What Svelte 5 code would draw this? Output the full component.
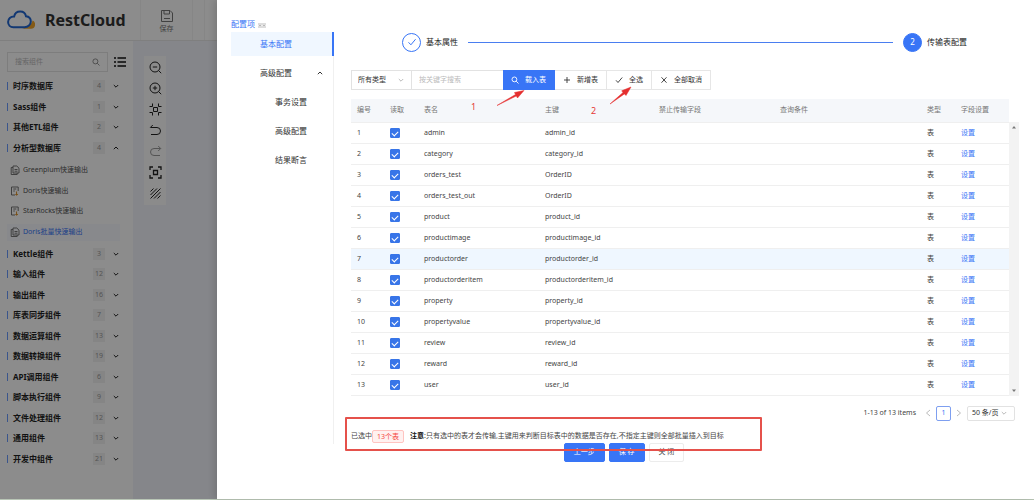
<script>
  const groups = [
    { name: '时序数据库', count: 4 },
    { name: 'Sass组件', count: 1 },
    { name: '其他ETL组件', count: 2 },
    {
      name: '分析型数据库',
      count: 4,
      children: [
        { name: 'Greenplum快速输出', icon: 'copy' },
        { name: 'Doris快速输出', icon: 'export' },
        { name: 'StarRocks快速输出', icon: 'export' },
        { name: 'Doris批量快速输出', icon: 'copy', active: true }
      ]
    },
    { name: 'Kettle组件', count: 3 },
    { name: '输入组件', count: 12 },
    { name: '输出组件', count: 16 },
    { name: '库表同步组件', count: 7 },
    { name: '数据运算组件', count: 13 },
    { name: '数据转换组件', count: 19 },
    { name: 'API调用组件', count: 6 },
    { name: '脚本执行组件', count: 9 },
    { name: '文件处理组件', count: 12 },
    { name: '通用组件', count: 13 },
    { name: '开发中组件', count: 21 }
  ];

  const columns = [
    { title: '编号', width: 33 },
    { title: '读取', width: 34 },
    { title: '表名', width: 121 },
    { title: '主键', width: 114 },
    { title: '禁止传输字段', width: 121 },
    { title: '查询条件', width: 147 },
    { title: '类型', width: 34 },
    { title: '字段设置', width: 54 }
  ];

  let rows = $state(
    [
      ['admin', 'admin_id'],
      ['category', 'category_id'],
      ['orders_test', 'OrderID'],
      ['orders_test_out', 'OrderID'],
      ['product', 'product_id'],
      ['productimage', 'productimage_id'],
      ['productorder', 'productorder_id'],
      ['productorderitem', 'productorderitem_id'],
      ['property', 'property_id'],
      ['propertyvalue', 'propertyvalue_id'],
      ['review', 'review_id'],
      ['reward', 'reward_id'],
      ['user', 'user_id']
    ].map(([name, key]) => ({ name, key, read: true }))
  );

  let selected = $derived(rows.filter((r) => r.read).length);

  function setAll(value) {
    rows.forEach((r) => (r.read = value));
  }
</script>

{#snippet chevron(up)}
  <svg class="chev" viewBox="0 0 8 8" width="8" height="8" aria-hidden="true">
    <path d={up ? 'M1.8 5.2 4 3l2.2 2.2' : 'M1.8 3 4 5.2 6.2 3'} fill="none" stroke="currentColor" stroke-width="1" />
  </svg>
{/snippet}

<div class="app">
  <div class="workspace">
    <header class="topbar">
      <div class="brand">
        <svg viewBox="0 0 28 20" width="28" height="20" aria-hidden="true">
          <path d="M15 18.800h9a4.300 4.300 0 0 0 1.600-8.200c-1 4.400-5.400 7.400-10.600 8.200z" fill="#f0a52a" />
          <path
            d="M6.300 17.200h11.200c3.600 0 6.300-2.500 6.300-5.600 0-2.900-2-5-4.800-5.300C18.500 3.400 16.300 1.500 13.200 1.500c-3.300 0-5.500 2.100-6.100 5.100C3.600 6.500 1.100 8.900 1.100 12c0 3 2.200 5.200 5.200 5.200z"
            fill="#fff" stroke="#2166d1" stroke-width="2" />
        </svg>
        <span>RestCloud</span>
      </div>
      <button class="save" type="button">
        <svg viewBox="0 0 14 14" width="14" height="14" fill="none" stroke="currentColor" aria-hidden="true">
          <path d="M1.500 1.500h8.500l2.500 2.500v8.500h-11zM4 1.500v3.500h5.500v-3.500M4 9.500h6" />
        </svg>
        保存
      </button>
      <div class="next"></div>
    </header>

    <div class="work">
      <aside class="sidebar">
        <div class="finder">
          <label class="find">
            <input type="text" placeholder="搜索组件" aria-label="搜索组件" />
            <svg viewBox="0 0 8 8" width="8" height="8" fill="none" stroke="currentColor" stroke-width=".8" aria-hidden="true">
              <circle cx="3.400" cy="3.400" r="2.500" /><path d="m5.300 5.300 2.200 2.200" />
            </svg>
          </label>
          <button type="button" class="icon" aria-label="列表">
            <svg viewBox="0 0 12 12" width="12" height="12" stroke="#111" stroke-width="1.400" aria-hidden="true">
              <path d="M0 2h2M0 6h2M0 10h2M3.500 2h8.500M3.500 6h8.500M3.500 10h8.500" />
            </svg>
          </button>
        </div>
        <nav class="tree">
          {#each groups as g}
            <button type="button" class="group">
              <span class="name">{g.name}</span>
              <span class="count">{g.count}</span>
              {@render chevron(!!g.children)}
            </button>
            {#if g.children}
              <div class="leaves">
                {#each g.children as c}
                  <button type="button" class="leaf" class:active={c.active}>
                    <svg viewBox="0 0 10 10" width="10" height="10" fill="none" stroke="#666" stroke-width=".9" aria-hidden="true">
                      {#if c.icon === 'copy'}
                        <path d="M3 1h3.800l2.200 2.200v4.800h-6zM3 2.500h-1.800v7h6v-1.500M4.500 4.500h3M4.500 6.200h3" />
                      {:else}
                        <path d="M8.200 5v-4h-6.700v8h3.500M3.300 3h3M3.300 5h1.500" />
                        <path d="M6.500 5.500v3.500M5.300 8l1.200 1.300L8 8" stroke="#d98a1e" />
                      {/if}
                    </svg>
                    {c.name}
                  </button>
                {/each}
              </div>
            {/if}
          {/each}
        </nav>
      </aside>

      <div class="canvas">
        <div class="tools">
          <button type="button" class="icon" aria-label="缩小">
            <svg viewBox="0 0 13 13"><circle cx="6" cy="6" r="5" /><path d="M3.800 6h4.400M9.600 9.600l2.600 2.600" /></svg>
          </button>
          <button type="button" class="icon" aria-label="放大">
            <svg viewBox="0 0 13 13"><circle cx="6" cy="6" r="5" /><path d="M3.800 6h4.400M6 3.800v4.400M9.600 9.600l2.600 2.600" /></svg>
          </button>
          <button type="button" class="icon" aria-label="实际尺寸">
            <svg viewBox="0 0 13 13"><path d="M4.500 4.500h4v4h-4zM.5 3.500h3v-3M9.500 .5v3h3M12.500 9.500h-3v3M3.500 12.500v-3h-3" /></svg>
          </button>
          <button type="button" class="icon" aria-label="撤销">
            <svg viewBox="0 0 13 13"><path d="M1.500 3.500h6.500a3.500 3.500 0 0 1 0 7h-6M3.800 1 1.300 3.500" /></svg>
          </button>
          <button type="button" class="icon" aria-label="重做" disabled>
            <svg viewBox="0 0 13 13"><path d="M11.500 3.500h-6.500a3.500 3.500 0 0 0 0 7h6M9.200 1l2.500 2.500-2.500 2.500" /></svg>
          </button>
          <button type="button" class="icon" aria-label="适应画布">
            <svg viewBox="0 0 13 13"><path d="M4.500 4.500h4v4h-4zM1 4v-3h3M9 1h3v3M12 9v3h-3M4 12h-3v-3" stroke-width="1.300" /></svg>
          </button>
          <button type="button" class="icon" aria-label="网格">
            <svg viewBox="0 0 13 13"><path d="M1.500 4.500l3-3M1.500 8 8 1.500M1.500 11.500l10-10M5 11.500l6.500-6.500M8.500 11.500l3-3" /></svg>
          </button>
        </div>
      </div>
    </div>
    <div class="mask"></div>
  </div>

  <main class="drawer">
    <h1>
      配置项
      <svg viewBox="0 0 8 5" width="8" height="5" fill="none" stroke="#aaa" stroke-width=".8" aria-hidden="true">
        <path d="M0 1h8M1 5v-2.500h2v2.500M5 5v-2.500h2v2.500" />
      </svg>
    </h1>
    <div class="body">
      <nav class="menu">
        <a href="#basic" class="active">基本配置</a>
        <a href="#advanced">高级配置 {@render chevron(true)}</a>
        <a href="#transaction" class="sub">事务设置</a>
        <a href="#more" class="sub">高级配置</a>
        <a href="#assert" class="sub">结果断言</a>
      </nav>

      <section class="content">
        <ol class="steps">
          <li>
            <span class="dot done">
              <svg viewBox="0 0 10 10" width="10" height="10" aria-hidden="true"><path d="m1.500 5.300 2.400 2.500 4.700-5.600" fill="none" stroke="currentColor" /></svg>
            </span>
            基本属性
          </li>
          <li class="line" aria-hidden="true"></li>
          <li><span class="dot">2</span>传输表配置</li>
        </ol>

        <div class="toolbar">
          <div class="picker">
            <select aria-label="类型"><option>所有类型</option></select>
            {@render chevron(false)}
          </div>
          <input class="keyword" type="text" placeholder="按关键字搜索" aria-label="按关键字搜索" />
          <button type="button" class="primary">
            <svg viewBox="0 0 8 8" width="8" height="8" aria-hidden="true"><circle cx="3.400" cy="3.400" r="2.400" /><path d="m5.200 5.200 2.300 2.300" /></svg>
            载入表
          </button>
          <button type="button">
            <svg viewBox="0 0 8 8" width="8" height="8" aria-hidden="true"><path d="M1 4h6M4 1v6" /></svg>
            新增表
          </button>
          <button type="button" onclick={() => setAll(true)}>
            <svg viewBox="0 0 8 8" width="8" height="8" aria-hidden="true"><path d="m1 4.300 2 2.200 4.200-5" /></svg>
            全选
          </button>
          <button type="button" onclick={() => setAll(false)}>
            <svg viewBox="0 0 8 8" width="8" height="8" aria-hidden="true"><path d="m1.500 1.300 5 5.400M6.500 1.300l-5 5.400" /></svg>
            全部取消
          </button>
          <svg class="arrow first" viewBox="0 0 30 18" width="30" height="18" aria-hidden="true">
            <path d="M1 16.500 19.500 5.500 18.500 3.500 28 1.500l-6.500 7.500-1.200-2z" />
          </svg>
          <svg class="arrow second" viewBox="0 0 24 20" width="24" height="20" aria-hidden="true">
            <path d="M1 18 14 6.500 12.700 4.800 22 1l-5 8.500-1.600-1.600z" />
          </svg>
        </div>

        <div class="grid">
          <table>
            <colgroup>
              {#each columns as c}<col style="width: {c.width}px" />{/each}
            </colgroup>
            <thead>
              <tr>{#each columns as c}<th>{c.title}</th>{/each}</tr>
            </thead>
            <tbody>
              {#each rows as r, i}
                <tr class:hover={i === 6}>
                  <td>{i + 1}</td>
                  <td><input type="checkbox" bind:checked={r.read} aria-label="读取 {r.name}" /></td>
                  <td>{r.name}</td>
                  <td>{r.key}</td>
                  <td></td>
                  <td></td>
                  <td>表</td>
                  <td><a href="#set">设置</a></td>
                </tr>
              {/each}
            </tbody>
          </table>
          <div class="track" aria-hidden="true">
            <svg viewBox="0 0 6 4" width="6" height="4"><path d="M1 3.500h4l-2-2.500z" /></svg>
            <svg viewBox="0 0 6 4" width="6" height="4"><path d="M1 .5h4l-2 2.500z" /></svg>
          </div>
          <span class="mark one">1</span>
          <span class="mark two">2</span>
        </div>

        <div class="pager">
          <span>1-13 of 13 items</span>
          <button type="button" class="step" aria-label="上一页">
            <svg viewBox="0 0 6 8" width="6" height="8"><path d="M5 1 1.500 4l3.500 3" /></svg>
          </button>
          <button type="button" class="page">1</button>
          <button type="button" class="step" aria-label="下一页">
            <svg viewBox="0 0 6 8" width="6" height="8"><path d="m1 1 3.500 3-3.500 3" /></svg>
          </button>
          <div class="picker size">
            <select aria-label="每页条数"><option>50 条/页</option></select>
            {@render chevron(false)}
          </div>
        </div>

        <div class="foot">
          <p class="notice">
            已选中<span class="tag">{selected}个表</span><b>注意</b>:只有选中的表才会传输,主键用来判断目标表中的数据是否存在,不指定主键则全部批量插入到目标
          </p>
          <div class="actions">
            <button type="button" class="primary">上一步</button>
            <button type="button" class="primary">保 存</button>
            <button type="button">关 闭</button>
          </div>
          <div class="frame"></div>
        </div>
      </section>
    </div>
  </main>
</div>

<style>
  :global(body) {
    background: #fff;
  }
  * {
    box-sizing: border-box;
  }
  .app {
    display: grid;
    grid-template-columns: 217px 1fr;
    min-height: 100vh;
    border-bottom: 1px solid #b9c6b6;
    font: 7px/12px 'Noto Sans', 'Noto Sans CJK SC', sans-serif;
    color: #444;
  }
  button,
  input,
  select {
    margin: 0;
    padding: 0;
    border: 0;
    background: none;
    font: inherit;
    color: inherit;
    outline: none;
  }
  a {
    color: #3875f6;
    text-decoration: none;
  }
  svg {
    flex: none;
  }
  .icon {
    display: flex;
  }

  /* Workspace behind the drawer */
  .workspace {
    position: relative;
    display: flex;
    flex-direction: column;
    overflow: hidden;
  }
  .mask {
    position: absolute;
    inset: 0;
    background: rgba(0, 0, 0, 0.45);
  }
  .topbar {
    display: flex;
    height: 41px;
    border-bottom: 1px solid #e8e8e8;
  }
  .brand {
    display: flex;
    align-items: center;
    gap: 10px;
    width: 140px;
    padding-left: 7px;
    font-size: 16px;
    font-weight: 700;
    color: #333;
  }
  .save {
    display: flex;
    flex-direction: column;
    align-items: center;
    width: 53px;
    padding-top: 9px;
    border: 1px solid #f4f4f4;
    border-width: 0 1px;
    color: #777;
  }
  .next {
    width: 12px;
    border-right: 1px solid #f4f4f4;
  }
  .work {
    display: flex;
    flex: 1;
  }
  .sidebar {
    display: flex;
    flex-direction: column;
    width: 133px;
    padding: 11px 7px 30px;
  }
  .finder {
    display: flex;
    align-items: center;
    gap: 6px;
    height: 20px;
    margin-bottom: 4px;
  }
  .find {
    display: flex;
    align-items: center;
    width: 101px;
    height: 20px;
    padding: 0 7px;
    border: 1px solid #e4e4e4;
    color: #777;
  }
  .find input {
    flex: 1;
    min-width: 0;
  }
  input::placeholder {
    color: #bbb;
    opacity: 1;
  }
  .tree,
  .leaves {
    display: flex;
    flex-direction: column;
  }
  .tree {
    flex: 1;
  }
  .leaves {
    flex: 4;
    margin: 2px 0;
    max-height: 84px;
  }
  .group,
  .leaf {
    display: flex;
    flex: 1;
    align-items: center;
    min-height: 20px;
    max-height: 21px;
    text-align: left;
  }
  .group {
    padding-right: 6px;
    font-size: 8px;
    font-weight: 700;
    color: #222;
  }
  .group::before {
    content: '';
    width: 1px;
    height: 8px;
    margin-right: 5px;
    background: #6b9bff;
  }
  .name {
    flex: 1;
  }
  .count {
    width: 12px;
    margin-right: 7px;
    background: #f3f3f3;
    font-size: 7px;
    font-weight: 400;
    text-align: center;
    color: #999;
  }
  .leaf {
    gap: 3px;
    padding-left: 3px;
    color: #555;
  }
  .leaf.active {
    max-height: 17px;
    min-height: 17px;
    margin: 2px 6px 1px 0;
    background: #f7f9ff;
    color: #3875f6;
  }
  .canvas {
    flex: 1;
    padding: 15px 11px;
    background: #f2f4fb;
  }
  .tools {
    display: flex;
    flex-direction: column;
    align-items: center;
    gap: 8px;
    width: 22px;
    padding: 5px 0;
    background: #fdfdfd;
  }
  .tools svg {
    width: 13px;
    height: 13px;
    fill: none;
    stroke: #222;
    stroke-width: 1;
  }
  .tools :disabled svg {
    stroke: #999;
  }

  /* Drawer */
  .drawer {
    min-width: 0;
    padding: 18px 15px 0 14px;
    background: #fff;
    box-shadow: -3px 0 6px rgba(0, 0, 0, 0.12);
    z-index: 1;
  }
  h1 {
    display: flex;
    align-items: center;
    gap: 3px;
    height: 12px;
    margin: 0 0 2px;
    font-size: 8px;
    font-weight: 400;
    color: #3875f6;
  }
  h1 svg {
    margin-top: 3px;
  }
  .body {
    display: flex;
    gap: 17px;
  }
  .menu {
    display: flex;
    flex: none;
    flex-direction: column;
    gap: 5px;
    width: 103px;
    height: 412px;
    border-right: 1px solid #f0f0f0;
    font-size: 8px;
  }
  .menu a {
    display: flex;
    align-items: center;
    justify-content: space-between;
    height: 24px;
    padding: 0 9px 0 29px;
    color: #333;
  }
  .menu .active {
    margin-right: -1px;
    border-right: 2px solid #3875f6;
    background: #f0f7ff;
    color: #3875f6;
  }
  .menu .sub {
    padding-left: 44px;
  }
  .content {
    flex: 1;
    min-width: 0;
  }
  .steps {
    display: flex;
    align-items: center;
    gap: 10px;
    height: 20px;
    margin: 0 0 18px;
    padding: 0 52px 0 51px;
    list-style: none;
    font-size: 8px;
    color: #222;
  }
  .steps li {
    display: flex;
    align-items: center;
    gap: 5px;
  }
  .steps .line {
    flex: 1;
    height: 1px;
    background: #4a7ef0;
  }
  .dot {
    display: flex;
    align-items: center;
    justify-content: center;
    width: 19px;
    height: 19px;
    border: 1px solid #3875f6;
    border-radius: 50%;
    background: #3875f6;
    color: #fff;
  }
  .done {
    background: #fff;
    color: #3875f6;
  }
  .toolbar {
    position: relative;
    z-index: 1;
    display: flex;
    height: 20px;
    margin-bottom: 9px;
  }
  .toolbar > button {
    display: flex;
    align-items: center;
    gap: 6px;
    padding: 0 8px;
    border: 1px solid #e6e6e6;
    border-left: 0;
    color: #333;
  }
  .toolbar button svg {
    fill: none;
    stroke: currentColor;
    stroke-width: 0.9;
  }
  .toolbar > .primary {
    border-color: #3875f6;
    background: #3875f6;
    color: #fff;
  }
  .picker {
    position: relative;
    width: 61px;
    border: 1px solid #e2e2e2;
    color: #333;
  }
  .picker select {
    display: block;
    width: 100%;
    height: 100%;
    padding-left: 6px;
    appearance: none;
  }
  .picker :global(.chev) {
    position: absolute;
    top: calc(50% - 4px);
    right: 6px;
    color: #bbb;
    pointer-events: none;
  }
  .keyword {
    width: 91px;
    padding: 0 7px;
    border: 1px solid #e2e2e2;
    border-width: 1px 0;
  }
  .grid {
    position: relative;
    display: flex;
    margin-bottom: 10px;
  }
  table {
    flex: 1;
    min-width: 0;
    border-collapse: collapse;
    table-layout: fixed;
  }
  th,
  td {
    height: 21px;
    padding: 0 0 0 6px;
    border-bottom: 1px solid #efefef;
    text-align: left;
    font-weight: 400;
  }
  th {
    height: 23px;
    background: #f5f7fa;
    color: #777;
  }
  .hover td {
    background: #eff7ff;
  }
  td input {
    position: relative;
    display: block;
    width: 10px;
    height: 10px;
    border: 1px solid #3875e8;
    border-radius: 1px;
    appearance: none;
  }
  td input:checked {
    background: #3875e8;
  }
  td input:checked::after {
    content: '';
    position: absolute;
    top: 1px;
    left: 2px;
    width: 3px;
    height: 5px;
    border: solid #fff;
    border-width: 0 1px 1px 0;
    transform: rotate(45deg);
  }
  .track {
    display: flex;
    flex-direction: column;
    align-items: center;
    justify-content: space-between;
    width: 10px;
    margin-top: 23px;
    padding: 3px 0;
    background: #f3f3f3;
  }
  .track path {
    fill: #777;
  }
  .mark {
    position: absolute;
    font-size: 9px;
    color: #e53935;
  }
  .one {
    top: 2px;
    left: 120px;
  }
  .two {
    top: 6px;
    left: 240px;
  }
  .arrow {
    position: absolute;
    fill: #e52f2f;
    stroke: #e52f2f;
    stroke-width: 0.5;
    pointer-events: none;
  }
  .first {
    top: 19px;
    left: 145px;
  }
  .second {
    top: 16px;
    left: 258px;
  }
  .pager {
    display: flex;
    align-items: center;
    justify-content: flex-end;
    gap: 5px;
    height: 15px;
    padding-right: 4px;
    margin-bottom: 9px;
  }
  .pager > span {
    margin-right: 4px;
  }
  .step {
    display: flex;
  }
  .step svg {
    fill: none;
    stroke: #aaa;
    stroke-width: 0.8;
  }
  .page {
    width: 15px;
    height: 15px;
    border: 1px solid #7e9ff0;
    border-radius: 2px;
    color: #3875f6;
  }
  .size {
    width: 48px;
    height: 15px;
    border-radius: 2px;
  }
  .size select {
    padding-left: 4px;
  }
  .foot {
    position: relative;
  }
  .notice {
    display: flex;
    align-items: center;
    height: 13px;
    margin: 0;
    white-space: nowrap;
  }
  .tag {
    height: 13px;
    margin-right: 6px;
    padding: 0 4px;
    border: 1px solid #ffc4c1;
    border-radius: 2px;
    background: #fff1f0;
    line-height: 11px;
    color: #f5483f;
  }
  .notice b {
    color: #111;
  }
  .actions {
    display: flex;
    justify-content: center;
    gap: 4px;
    padding-right: 122px;
  }
  .actions button {
    height: 19px;
    padding: 0 9px;
    border: 1px solid #ececec;
    border-radius: 2px;
  }
  .actions .primary {
    border-color: #3875f6;
    background: #3875f6;
    color: #fff;
  }
  .frame {
    position: absolute;
    top: -13px;
    left: -6px;
    width: 417px;
    height: 34px;
    border: 2px solid #e5514b;
    border-radius: 1px;
    pointer-events: none;
  }
</style>
